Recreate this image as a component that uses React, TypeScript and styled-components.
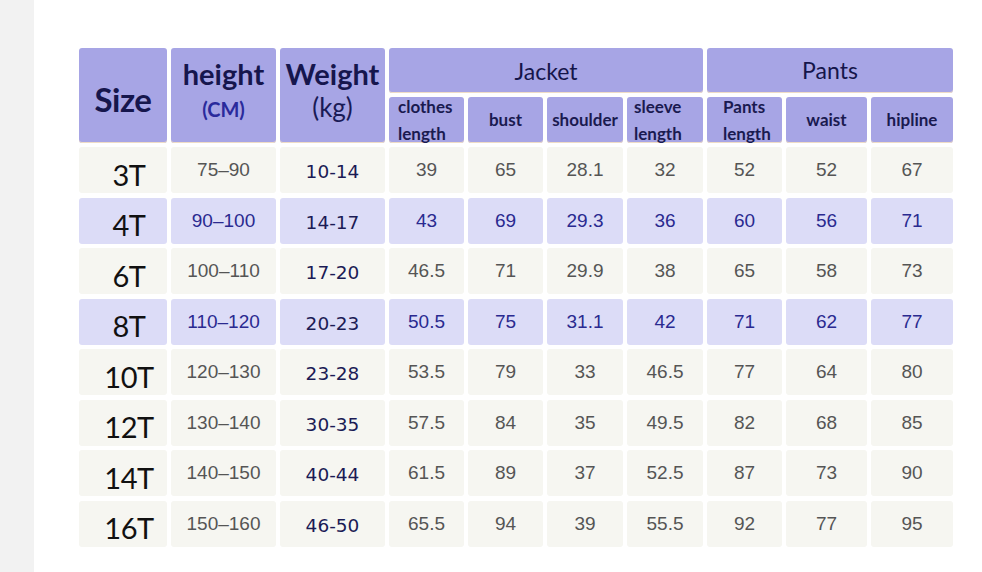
import React from "react";
import styled, { createGlobalStyle } from "styled-components";

const GlobalStyle = createGlobalStyle`
  html, body { margin: 0; padding: 0; background: #ffffff; }
  body { font-family: "Liberation Sans", Arial, sans-serif; }
`;

const Page = styled.div`
  display: flex;
  width: 982px;
  height: 572px;
  overflow: hidden;
  background: #ffffff;
`;

const SideStrip = styled.div`
  width: 34px;
  flex: none;
  background: #f2f2f2;
`;

const Main = styled.div`
  flex: 1;
  padding: 47.5px 0 0 45px;
`;

const Table = styled.div`
  display: grid;
  grid-template-columns: 88px 105px 105px 75px 75px 76px 76px 75px 81px 82px;
  grid-template-rows: 45px 45.5px repeat(8, 46px);
  column-gap: 4px;
  row-gap: 4.5px;
`;

const HeadCell = styled.div<{
  $col?: string;
  $row?: string;
  $align?: string;
  $justify?: string;
  $padLeft?: number;
  $padTop?: number;
}>`
  grid-column: ${(p) => p.$col || "auto"};
  grid-row: ${(p) => p.$row || "auto"};
  background: #a7a5e5;
  border-radius: 3px;
  box-shadow: inset 0 -1px 0 #efdcc6;
  color: #16164d;
  display: flex;
  flex-direction: column;
  justify-content: ${(p) => p.$justify || "center"};
  align-items: ${(p) => p.$align || "center"};
  padding-left: ${(p) => p.$padLeft || 0}px;
  padding-top: ${(p) => p.$padTop || 0}px;
  box-sizing: border-box;
  font-family: Lato, "Open Sans", sans-serif;
`;

const SizeTitle = styled.span`
  font-size: 33px;
  font-weight: 700;
  letter-spacing: -0.5px;
  line-height: 1;
`;

const BigTitle = styled.span`
  font-size: 29px;
  font-weight: 700;
  line-height: 34px;
`;

const UnitCM = styled.span`
  font-size: 20px;
  font-weight: 700;
  color: #2a2a9c;
  line-height: 36px;
`;

const UnitKg = styled.span`
  font-size: 26px;
  font-weight: 400;
  color: #1a1a55;
  line-height: 32px;
`;

const GroupTitle = styled.span`
  font-size: 23px;
  font-weight: 400;
  line-height: 1;
  color: #15154a;
`;

const SubTitle = styled.span`
  font-size: 17px;
  font-weight: 700;
  line-height: 27px;
  color: #1a1a50;
`;

const DataCell = styled.div<{ $alt: boolean; $kind: "size" | "height" | "weight" | "num" }>`
  background: ${(p) => (p.$alt ? "#dcdcf7" : "#f6f6f1")};
  border-radius: 3px;
  display: flex;
  align-items: center;
  justify-content: center;
  box-sizing: border-box;
  ${(p) =>
    p.$kind === "size"
      ? `font-family: Lato, "Open Sans", sans-serif; font-size: 29px; color: #111111; padding: 8px 0 0 12px; letter-spacing: -0.5px;`
      : p.$kind === "weight"
      ? `font-family: "DejaVu Sans", Verdana, sans-serif; font-size: 18.5px; color: #1b1b55; padding-top: 3px;`
      : `font-family: "Liberation Sans", Arial, sans-serif; font-size: 19px; color: ${p.$alt ? "#2a2a90" : "#555555"};`}
`;

type Row = { size: string; height: string; weight: string; nums: string[] };

const rows: Row[] = [
  { size: "3T", height: "75–90", weight: "10-14", nums: ["39", "65", "28.1", "32", "52", "52", "67"] },
  { size: "4T", height: "90–100", weight: "14-17", nums: ["43", "69", "29.3", "36", "60", "56", "71"] },
  { size: "6T", height: "100–110", weight: "17-20", nums: ["46.5", "71", "29.9", "38", "65", "58", "73"] },
  { size: "8T", height: "110–120", weight: "20-23", nums: ["50.5", "75", "31.1", "42", "71", "62", "77"] },
  { size: "10T", height: "120–130", weight: "23-28", nums: ["53.5", "79", "33", "46.5", "77", "64", "80"] },
  { size: "12T", height: "130–140", weight: "30-35", nums: ["57.5", "84", "35", "49.5", "82", "68", "85"] },
  { size: "14T", height: "140–150", weight: "40-44", nums: ["61.5", "89", "37", "52.5", "87", "73", "90"] },
  { size: "16T", height: "150–160", weight: "46-50", nums: ["65.5", "94", "39", "55.5", "92", "77", "95"] },
];

export default function App() {
  return (
    <>
      <GlobalStyle />
      <Page>
        <SideStrip />
        <Main>
          <Table>
            <HeadCell $col="1" $row="1 / span 2" $padTop={8}>
              <SizeTitle>Size</SizeTitle>
            </HeadCell>
            <HeadCell $col="2" $row="1 / span 2" $justify="flex-start" $padTop={9}>
              <BigTitle>height</BigTitle>
              <UnitCM>(CM)</UnitCM>
            </HeadCell>
            <HeadCell $col="3" $row="1 / span 2" $justify="flex-start" $padTop={9}>
              <BigTitle>Weight</BigTitle>
              <UnitKg>(kg)</UnitKg>
            </HeadCell>
            <HeadCell $col="4 / span 4" $row="1" $padTop={3}>
              <GroupTitle>Jacket</GroupTitle>
            </HeadCell>
            <HeadCell $col="8 / span 3" $row="1" $padTop={1}>
              <GroupTitle>Pants</GroupTitle>
            </HeadCell>

            <HeadCell $col="4" $row="2" $align="flex-start" $padLeft={9}>
              <SubTitle>clothes</SubTitle>
              <SubTitle>length</SubTitle>
            </HeadCell>
            <HeadCell $col="5" $row="2" $padLeft={0}>
              <SubTitle>bust</SubTitle>
            </HeadCell>
            <HeadCell $col="6" $row="2">
              <SubTitle>shoulder</SubTitle>
            </HeadCell>
            <HeadCell $col="7" $row="2" $align="flex-start" $padLeft={7}>
              <SubTitle>sleeve</SubTitle>
              <SubTitle>length</SubTitle>
            </HeadCell>
            <HeadCell $col="8" $row="2" $align="flex-start" $padLeft={16}>
              <SubTitle>Pants</SubTitle>
              <SubTitle>length</SubTitle>
            </HeadCell>
            <HeadCell $col="9" $row="2">
              <SubTitle>waist</SubTitle>
            </HeadCell>
            <HeadCell $col="10" $row="2">
              <SubTitle>hipline</SubTitle>
            </HeadCell>

            {rows.map((r, i) => {
              const alt = i === 1 || i === 3;
              return (
                <React.Fragment key={r.size}>
                  <DataCell $alt={alt} $kind="size">{r.size}</DataCell>
                  <DataCell $alt={alt} $kind="height">{r.height}</DataCell>
                  <DataCell $alt={alt} $kind="weight">{r.weight}</DataCell>
                  {r.nums.map((n, j) => (
                    <DataCell key={j} $alt={alt} $kind="num">{n}</DataCell>
                  ))}
                </React.Fragment>
              );
            })}
          </Table>
        </Main>
      </Page>
    </>
  );
}
